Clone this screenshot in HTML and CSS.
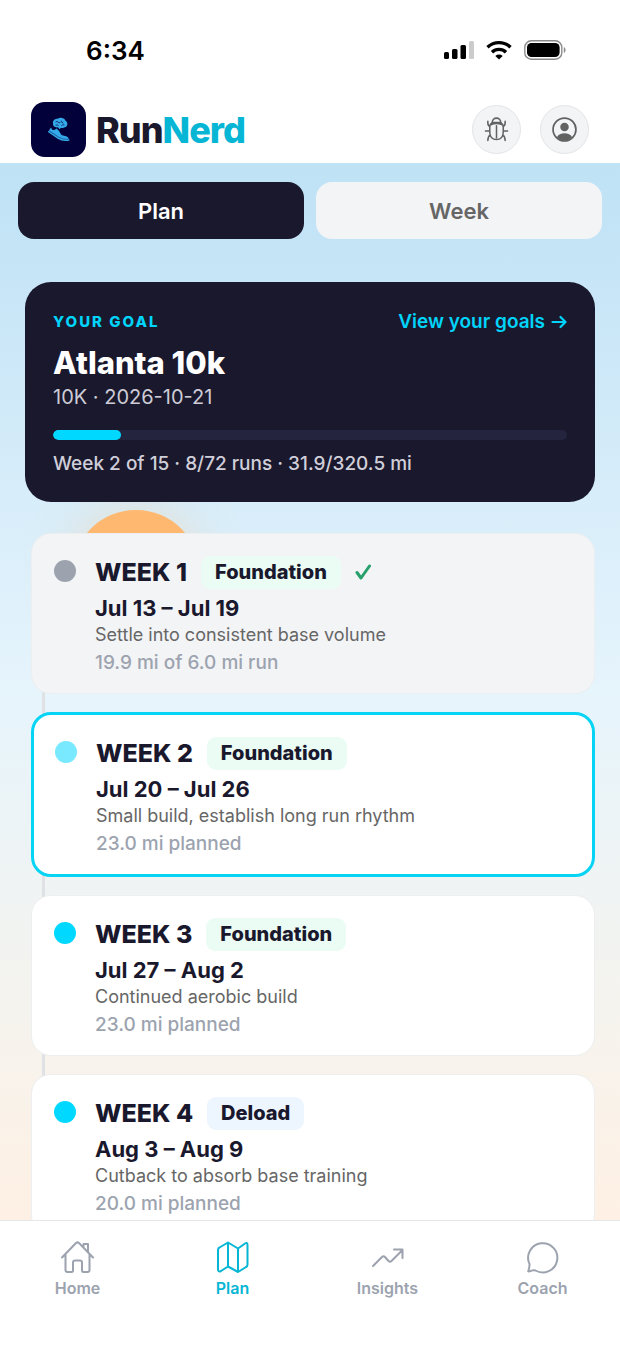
FILE: index.html
```html
<!DOCTYPE html>
<html lang="en">
<head>
<meta charset="utf-8">
<meta name="viewport" content="width=device-width, initial-scale=1">
<title>RunNerd – Plan</title>
<link rel="stylesheet" href="styles.css">
</head>
<body>
<div class="app">
  <div class="status">
    <span class="status-time">6:34</span>
    <div class="status-icons">
      <svg width="30" height="20" viewBox="0 0 30 20" aria-hidden="true">
        <rect x="0" y="12" width="5" height="7" rx="1.5"/><rect x="8" y="9" width="5.500" height="10" rx="1.500"/><rect x="16.500" y="5" width="5.500" height="14" rx="1.500"/><rect x="25" y="1" width="5" height="18" rx="1.500" fill="#cbcbcb"/>
      </svg>
      <svg width="26" height="20" viewBox="0 0 26 20" fill="none" stroke="#000" stroke-width="3.400" aria-hidden="true">
        <path d="M1.500 7.300a16.500 16.500 0 0 1 23 0"/><path d="M6 12.200a10.200 10.200 0 0 1 14 0"/><path d="M9.300 16a5.400 5.400 0 0 1 7.400 0L13 19.600z" fill="#000" stroke="none"/>
      </svg>
      <svg width="42" height="20" viewBox="0 0 42 20" aria-hidden="true">
        <rect x=".8" y=".8" width="37" height="18.400" rx="6.500" fill="none" stroke="#8a8a8a" stroke-width="1.400"/><rect x="3" y="3" width="32.600" height="14" rx="4.500"/><path d="M39.800 7c2.300.8 2.300 5.200 0 6z" fill="#8a8a8a"/>
      </svg>
    </div>
  </div>

  <header class="header">
    <div class="brand">
      <svg class="brand-logo" viewBox="0 0 56 56" aria-hidden="true">
        <rect width="56" height="56" rx="14" fill="#03013a"/>
        <path d="M22.500 22c-1-3 2-5.300 4.500-5 3-2 7-.7 8 1.800 3 1.500 2.500 6.500-.5 7q-2 1-4 .3l-1.500 1.700-1.500-2c-3 .5-5.500-1.300-5-3.800z" fill="#33a9ea"/>
        <path d="M25 20.500q1.500-1.500 2.500 0t2.500 0M31 19q0 2.500 2 2.500M25 23.500q2-.5 3 .5M31 24q1.500-1.500 3-.5" fill="none" stroke="#03013a" stroke-width=".7"/>
        <path d="M20.300 26l1.500 2.500q2.500.3 4.200-1.500l2.500 2.500 2.500 4 5.500 1.500q2 1 2 3.500-5 1.500-9-1L18 29.500z" fill="#33a9ea"/>
        <path d="M18 30.300l9.500 6.500q4.500 3 11 2" fill="none" stroke="#33a9ea" stroke-width="1.500" stroke-linecap="round"/>
        <path d="M19 29.500l9.500 6.500q4 2.500 9.500 2" fill="none" stroke="#03013a" stroke-width=".4"/>
      </svg>
      <span class="brand-name">Run<span class="brand-accent">Nerd</span></span>
    </div>
    <div class="actions">
      <button class="round-button" type="button" aria-label="Report a bug">
        <svg width="25" height="25" viewBox="0 0 26 26" fill="none" stroke="#626262" stroke-width="1.600" stroke-linecap="round">
          <path d="M8.500 6.200C8.500-.5 17.500-.5 17.500 6.200"/><path d="M9.500 5.800h7q3.500 1 3.500 5v5c0 5-3 7.700-7 7.700s-7-2.700-7-7.700v-5q0-4 3.500-5zM7 8q6-2.500 12 0M13 9v12.500M6 14.500H1.500M20 14.500h4.500M6 10Q3.500 8.500 4 4.500M20 10q2.500-1.500 2-5.500M6.500 18.500Q4 20 4 24.500M19.500 18.500q2.500 1.500 2.500 6"/>
        </svg>
      </button>
      <button class="round-button" type="button" aria-label="Profile">
        <svg width="25" height="25" viewBox="0 0 26 26">
          <circle cx="13" cy="13" r="11.900" fill="none" stroke="#626262" stroke-width="1.800"/><circle cx="13" cy="10.300" r="4.400" fill="#626262"/><path d="M5 21c2.500-5.500 13.500-5.500 16 0a11.500 11.500 0 0 1-16 0z" fill="#626262"/>
        </svg>
      </button>
    </div>
  </header>

  <main class="content">
    <div class="sun"></div>
    <div class="tabs">
      <button class="tab tab-active" type="button">Plan</button>
      <button class="tab" type="button">Week</button>
    </div>

    <section class="goal">
      <div class="goal-top">
        <span class="goal-label">YOUR GOAL</span>
        <a class="goal-link" href="#goals">View your goals
          <svg width="16" height="14" viewBox="0 0 16 14" fill="none" stroke="currentColor" stroke-width="2.200" stroke-linecap="round" stroke-linejoin="round" aria-hidden="true"><path d="M1.500 7h12.500M9.500 2l5 5-5 5"/></svg>
        </a>
      </div>
      <h1 class="goal-title">Atlanta 10k</h1>
      <p class="goal-date">10K · 2026-10-21</p>
      <div class="progress" role="progressbar" aria-label="Plan progress" aria-valuemin="0" aria-valuemax="15" aria-valuenow="2"><div class="progress-fill" style="width: 13.3%"></div></div>
      <p class="goal-stats">Week 2 of 15 · 8/72 runs · 31.9/320.5 mi</p>
    </section>

    <div class="weeks">
      <article class="week week-done">
        <span class="dot"></span>
        <div class="week-body">
          <div class="week-head"><h2 class="week-title">WEEK 1</h2><span class="phase">Foundation</span>
            <svg class="check" width="18" height="18" viewBox="0 0 18 18" fill="none" stroke="#27a06c" stroke-width="3" stroke-linecap="round" stroke-linejoin="round" role="img" aria-label="Completed"><path d="M2 9.500l4 5.500L14.500 3"/></svg>
          </div>
          <p class="week-dates">Jul 13 – Jul 19</p>
          <p class="week-note">Settle into consistent base volume</p>
          <p class="week-miles">19.9 mi of 6.0 mi run</p>
        </div>
      </article>
      <article class="week week-current">
        <span class="dot"></span>
        <div class="week-body">
          <div class="week-head"><h2 class="week-title">WEEK 2</h2><span class="phase">Foundation</span></div>
          <p class="week-dates">Jul 20 – Jul 26</p>
          <p class="week-note">Small build, establish long run rhythm</p>
          <p class="week-miles">23.0 mi planned</p>
        </div>
      </article>
      <article class="week">
        <span class="dot"></span>
        <div class="week-body">
          <div class="week-head"><h2 class="week-title">WEEK 3</h2><span class="phase">Foundation</span></div>
          <p class="week-dates">Jul 27 – Aug 2</p>
          <p class="week-note">Continued aerobic build</p>
          <p class="week-miles">23.0 mi planned</p>
        </div>
      </article>
      <article class="week">
        <span class="dot"></span>
        <div class="week-body">
          <div class="week-head"><h2 class="week-title">WEEK 4</h2><span class="phase phase-deload">Deload</span></div>
          <p class="week-dates">Aug 3 – Aug 9</p>
          <p class="week-note">Cutback to absorb base training</p>
          <p class="week-miles">20.0 mi planned</p>
        </div>
      </article>
    </div>
  </main>

  <nav class="nav" aria-label="Main">
    <a class="nav-item" href="#home">
      <svg class="nav-icon" viewBox="0 0 34 34"><path d="M1 17.500L15 3q1.500-1.300 3 0l14 14.500M4.500 14.500V30q0 2 2 2h4q1.500 0 1.500-1.500v-8q0-2 2-2h5q2 0 2 2v8q0 1.500 1.500 1.500h4q2 0 2-2V14.500M22.500 7.500V4H27v8.500"/></svg>
      Home
    </a>
    <a class="nav-item nav-active" href="#plan" aria-current="page">
      <svg class="nav-icon" viewBox="0 0 34 34"><path d="M12 2.500L3.500 7.500Q2 8.200 2 10v19q0 3.500 3 2l7-4.500 10 5.500 8-5q1.500-.7 1.500-2.500V5q0-3-2.500-1.500L22 8.500zM12 2.500v24M22 8.500V32"/></svg>
      Plan
    </a>
    <a class="nav-item" href="#insights">
      <svg class="nav-icon" viewBox="0 0 34 34"><path d="M2 26l9-9q1.500-1.500 3 0l3.500 4q1.500 1.300 3 0L31.500 10M23 9.500h8.500V18"/></svg>
      Insights
    </a>
    <a class="nav-item" href="#coach">
      <svg class="nav-icon" viewBox="0 0 34 34"><path d="M3.500 24A14.600 14.600 0 1 1 9.500 30.500q-2-.8-4 .2-1.500.9-3.300.6 1.500-3.800 1.300-7.300z"/></svg>
      Coach
    </a>
  </nav>
</div>
</body>
</html>
```

FILE: styles.css
```css
* { box-sizing: border-box; }
body { margin: 0; font-family: Inter, "Liberation Sans", sans-serif; color: #1a182d; background: #fff; }
h1, h2, p { margin: 0; }
button { font: inherit; border: 0; padding: 0; cursor: pointer; }
a { text-decoration: none; }

.app { height: 100vh; display: flex; flex-direction: column; }

.status { flex: none; display: flex; align-items: center; justify-content: space-between; height: 100px; padding: 0 54px 0 86px; }
.status-time { font-size: 26px; font-weight: 600; color: #000; }
.status-icons { display: flex; align-items: center; gap: 12px; }

.header { flex: none; display: flex; align-items: center; justify-content: space-between; padding: 2px 31px 6px; }
.brand { display: flex; align-items: center; gap: 10px; }
.brand-logo { width: 55px; height: 55px; }
.brand-name { font-size: 36px; font-weight: 800; letter-spacing: -1px; }
.brand-accent { color: #06b6d4; }
.actions { display: flex; gap: 19px; }
.round-button { display: grid; place-items: center; width: 49px; height: 49px; border: 1px solid #e3e4e7; border-radius: 50%; background: #f3f4f6; }

.content { position: relative; z-index: 0; flex: 1; min-height: 0; overflow: hidden; padding: 19px 18px; background: linear-gradient(#bfe2f5 0%, #c6e5f7 10%, #e6f4fc 50%, #f7f3ec 84%, #fef0e4 100%); }
.sun { position: absolute; z-index: -1; top: 347px; left: 72px; width: 128px; height: 128px; border-radius: 50%; background: #ffb870; box-shadow: 0 0 50px rgba(255, 184, 112, 0.3); }

.tabs { display: flex; gap: 12px; }
.tab { flex: 1; height: 57px; border-radius: 16px; font-size: 22px; font-weight: 600; color: #666; background: #f3f4f6; }
.tab-active { color: #fff; background: #1a182d; }

.goal { margin: 43px 7px 0; padding: 28px 28px 26px; border-radius: 26px; background: #1a182d; }
.goal-top { display: flex; align-items: center; justify-content: space-between; line-height: 24px; }
.goal-label { font-size: 15px; font-weight: 800; letter-spacing: 2px; color: #00d4fa; }
.goal-link { display: flex; align-items: center; gap: 6px; font-size: 19px; font-weight: 600; color: #00d4fa; }
.goal-title { margin-top: 9px; font-size: 31px; font-weight: 800; line-height: 40px; color: #fff; }
.goal-date { font-size: 20px; line-height: 28px; color: #cdccd6; }
.progress { height: 10px; margin-top: 19px; border-radius: 5px; overflow: hidden; background: #25243f; }
.progress-fill { height: 100%; border-radius: 5px; background: #00d8ff; }
.goal-stats { margin-top: 12px; font-size: 19px; font-weight: 500; line-height: 24px; color: #d0cfd9; }

.weeks { position: relative; display: flex; flex-direction: column; gap: 18px; margin: 31px 7px 0 13px; }
.weeks::before { content: ""; position: absolute; z-index: -1; top: 20px; bottom: 0; left: 11px; width: 3px; background: #dfe1e4; }
.week { display: flex; gap: 19px; padding: 21px 22px 17px; border: 1px solid #eceef0; border-radius: 20px; background: #fff; }
.week-done { background: #f3f4f6; }
.week-current { padding: 21px 21px 17px; border: 3px solid #06d4f4; }
.dot { flex: none; width: 22px; height: 22px; margin-top: 5px; border-radius: 50%; background: #00d8ff; }
.week-done .dot { background: #9ca3af; }
.week-current .dot { background: #78e9ff; }
.week-head { display: flex; align-items: center; gap: 14px; height: 34px; }
.week-title { font-size: 25px; font-weight: 800; }
.phase { padding: 0 14px; border-radius: 9px; font-size: 20px; font-weight: 800; line-height: 33px; background: #ebfcf4; }
.phase-deload { background: #edf5ff; }
.week-dates { margin-top: 5px; font-size: 22px; font-weight: 700; line-height: 28px; }
.week-note { font-size: 18px; line-height: 26px; color: #666; }
.week-miles { margin-top: 2px; font-size: 19px; font-weight: 500; line-height: 26px; color: #9ca3af; }

.nav { flex: none; display: grid; grid-template-columns: repeat(4, 1fr); height: 128px; padding-top: 19px; border-top: 1px solid #e5e7eb; background: #fff; }
.nav-item { display: flex; flex-direction: column; align-items: center; gap: 2px; font-size: 16px; font-weight: 600; line-height: 24px; color: #9ca3af; }
.nav-active { color: #06b6d4; }
.nav-icon { width: 34px; height: 34px; fill: none; stroke: currentColor; stroke-width: 2; stroke-linecap: round; stroke-linejoin: round; }
```
